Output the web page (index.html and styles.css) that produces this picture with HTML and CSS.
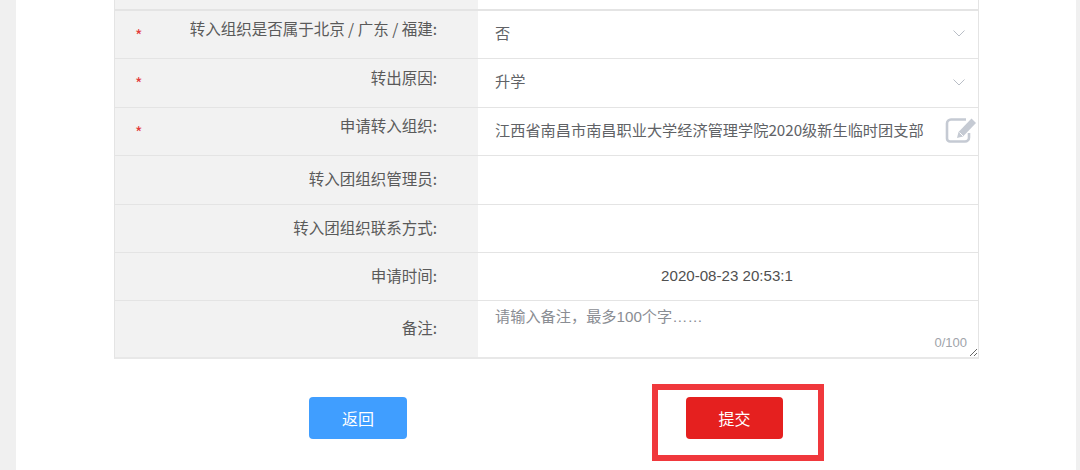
FILE: index.html
```html
<!DOCTYPE html>
<html lang="zh-CN">
<head>
<meta charset="utf-8">
<title>转接申请</title>
<link rel="stylesheet" href="styles.css">
</head>
<body>
<main class="card">
  <div class="form-table">
    <div class="row row-top"><div class="label"></div><div class="value"></div></div>
    <div class="row row-a">
      <div class="label required"><span class="star">*</span><span class="label-text">转入组织是否属于北京 / 广东 / 福建:</span></div>
      <div class="value"><span>否</span>
        <svg class="chevron" viewBox="0 0 12 7"><path d="M.5.5 6 6l5.500-5.500"/></svg></div>
    </div>
    <div class="row row-b">
      <div class="label required"><span class="star">*</span><span class="label-text">转出原因:</span></div>
      <div class="value"><span>升学</span>
        <svg class="chevron" viewBox="0 0 12 7"><path d="M.5.5 6 6l5.500-5.500"/></svg></div>
    </div>
    <div class="row row-a">
      <div class="label required"><span class="star">*</span><span class="label-text">申请转入组织:</span></div>
      <div class="value"><span>江西省南昌市南昌职业大学经济管理学院2020级新生临时团支部</span>
        <svg class="edit" viewBox="0 0 32 26">
          <path class="edit-frame" d="M21 2.500H6A4 4 0 0 0 2 6.500v15a3 3 0 0 0 3 3h15a4 4 0 0 0 4-4V16"/>
          <path class="edit-pencil" d="M26.500 1.500 31 6 18 19.500l-6 1.500 1.500-6z"/>
          <path class="edit-notch" d="M14.500 15.500 18 19"/>
        </svg></div>
    </div>
    <div class="row row-b"><div class="label"><span class="label-text">转入团组织管理员:</span></div><div class="value"></div></div>
    <div class="row row-a"><div class="label"><span class="label-text">转入团组织联系方式:</span></div><div class="value"></div></div>
    <div class="row row-a"><div class="label"><span class="label-text">申请时间:</span></div><div class="value date">2020-08-23 20:53:1</div></div>
    <div class="row row-note">
      <div class="label"><span class="label-text">备注:</span></div>
      <div class="value note">
        <textarea class="note-input" placeholder="请输入备注，最多100个字……"></textarea>
        <span class="counter">0/100</span>
      </div>
    </div>
  </div>
  <div class="actions">
    <button class="btn btn-back" type="button">返回</button>
    <div class="submit-wrap">
      <button class="btn btn-submit" type="button">提交</button>
      <div class="highlight"></div>
    </div>
  </div>
</main>
</body>
</html>
```
FILE: styles.css
```css
* { box-sizing: border-box; }
html, body { margin: 0; height: 470px; overflow: hidden; }
body {
  background: #f0f0f0;
  font-family: "Noto Sans CJK SC", "Liberation Sans", sans-serif;
  color: #606266;
}
.card {
  margin: 0 4px 0 16px;
  height: 470px;
  background: #fff;
  padding-left: 98px;
}
.form-table {
  width: 865px;
  border-left: 1px solid #e4e4e4;
  border-right: 1px solid #e4e4e4;
  border-bottom: 2px solid #e8e8e8;
}
.row {
  display: grid;
  grid-template-columns: 363px 1fr;
  border-bottom: 1px solid #e4e4e4;
}
.row-top { height: 11px; border-bottom-width: 2px; }
.row-a { height: 48px; }
.row-b { height: 49px; }
.row-note { height: 56px; border-bottom: 0; }
.label {
  display: flex;
  align-items: center;
  justify-content: flex-end;
  position: relative;
  padding: 0 41px 4px 0;
  background: #f2f2f2;
  font-size: 15.500px;
  color: #5a5a5a;
}
.required { padding-bottom: 13px; }
.star {
  position: absolute;
  left: 20px;
  top: 14px;
  color: #e33b3b;
  font-size: 16px;
  line-height: 20px;
}
.value {
  display: flex;
  align-items: center;
  justify-content: space-between;
  padding: 0 13px 6px 17px;
  font-size: 15.2px;
  color: #606266;
}
.chevron {
  width: 12px;
  height: 7px;
  margin-top: 4px;
  fill: none;
  stroke: #b9bec6;
  stroke-width: 1;
}
.edit {
  width: 32px;
  height: 26px;
  margin: 3px -12px 0 0;
}
.edit-frame { fill: none; stroke: #c5cad3; stroke-width: 2.6; }
.edit-pencil { fill: #c5cad3; }
.edit-notch { fill: none; stroke: #fff; stroke-width: 1; }
.date {
  justify-content: center;
  padding: 0 2px 2px 0;
  font-family: "Liberation Sans", sans-serif;
  font-size: 15.100px;
  color: #505050;
}
.note { position: relative; padding: 0; }
.note-input {
  display: block;
  width: 100%;
  height: 100%;
  padding: 5px 17px;
  border: 0;
  outline: 0;
  background: #fff;
  font: 15.2px/1.4 "Liberation Sans", "Noto Sans CJK SC", sans-serif;
  color: #606266;
}
.note-input::placeholder { color: #8a8d93; opacity: 1; }
.counter {
  position: absolute;
  right: 11px;
  bottom: 7px;
  font: 13px/14px "Liberation Sans", sans-serif;
  color: #a0a4aa;
}
.actions {
  display: flex;
  gap: 279px;
  margin-top: 38px;
  padding-left: 195px;
}
.btn {
  display: block;
  width: 98px;
  height: 42px;
  border: 0;
  border-radius: 4px;
  color: #fff;
  font: 16px "Noto Sans CJK SC", "Liberation Sans", sans-serif;
}
.btn-back { background: #409eff; }
.btn-submit { width: 97px; background: #e5201f; }
.submit-wrap { position: relative; }
.highlight {
  position: absolute;
  inset: -13px -41px -22px -34px;
  border: 6.500px solid #f0383c;
}
```
